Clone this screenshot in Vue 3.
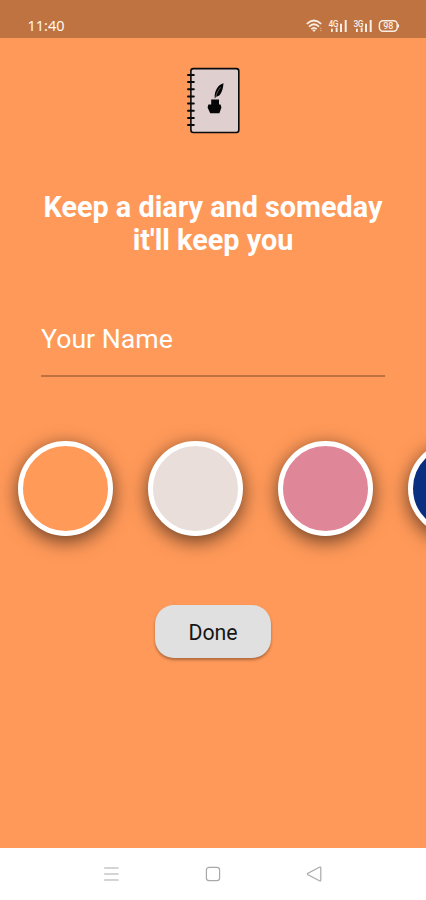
<script setup>
import { ref } from 'vue'

const name = ref('')
const swatches = ['#ff9a59', '#e9ded9', '#e08699', '#0b2f80']
const selected = ref(0)
const bindings = [10, 17.1, 24.3, 31.4, 38.6, 45.7, 52.9, 60]
</script>

<template>
  <main class="screen">
    <header class="status">
      <span class="clock">11:40</span>
      <svg class="signals" width="96" height="16" viewBox="0 0 96 16" aria-hidden="true">
        <g fill="none" stroke="#f8eee6" stroke-width="1.8">
          <path d="M.8 5.8Q8 -.8 15.2 5.8" />
          <path d="M3 8.6Q8 3.9 13 8.6" />
          <path d="M5.3 11.2Q8 8.6 10.7 11.2" />
        </g>
        <path d="M6.2 12.1Q8 10.8 9.8 12.1L8 14Z" fill="#f8eee6" />
        <path d="M13.6 10.8l1.2-1.5 1.2 1.5zM13.6 12.1l1.2 1.5 1.2-1.5z" fill="#dba987" />
        <g fill="#f8eee6">
          <path d="M25 10.8h1.8V14H25zM29.7 9.5h1.9V14h-1.9zM34 5.7h2V14h-2zM38.7 2h2v12h-2z" />
          <path d="M50 10.8h1.8V14H50zM54.7 9.5h1.9V14h-1.9zM59 5.7h2V14h-2zM63.7 2h2v12h-2z" />
        </g>
        <text class="net" x="22.6" y="8.7">4G</text>
        <text class="net" x="47.6" y="8.7">3G</text>
        <rect x="73.4" y="2.8" width="17.8" height="10.4" rx="3.6" fill="none" stroke="#f8eee6" stroke-width="1.5" />
        <path d="M92 6.1q1.2.2 1.2 1.9T92 9.9z" fill="#f8eee6" />
        <text class="charge" x="82.3" y="11.3">98</text>
      </svg>
    </header>

    <section class="content">
      <svg class="logo" width="56" height="70" viewBox="0 0 56 70" aria-hidden="true">
        <rect x="5.9" y="3.6" width="47.9" height="63.9" rx="2.4" fill="#e0cfcf" stroke="#090a0d" stroke-width="1.6" />
        <g stroke="#090a0d" stroke-width="2" stroke-linecap="round">
          <line v-for="y in bindings" :key="y" x1="3" :y1="y" x2="8.8" :y2="y" />
        </g>
        <path d="M26.2 34.5h7.8v5h1.6l.8 3-2 5.7h-9.2l-2.6-5.7.8-3h2.8z" fill="#050505" />
        <path d="M29.8 33.4C29.2 29.3 30.3 25.7 32.2 23c1.6-2.3 3.6-3.8 6.3-4.7-.3 4.6-1.3 8.3-3.4 11.2-1 1.3-2.9 2.2-4 2.3z" fill="#050505" />
        <path d="M30.8 32.2C31.4 28.6 33 25.4 35.6 22.4" fill="none" stroke="#9d9191" stroke-width=".6" />
      </svg>

      <h1 class="title">Keep a diary and someday it'll keep you</h1>

      <input v-model="name" class="name" type="text" placeholder="Your Name" aria-label="Your Name" />

      <div class="palette">
        <button
          v-for="(color, index) in swatches"
          :key="color"
          class="swatch"
          type="button"
          :aria-label="color"
          :aria-pressed="selected === index"
          :style="{ backgroundColor: color }"
          @click="selected = index"
        ></button>
      </div>

      <button class="done" type="button">Done</button>
    </section>

    <nav class="navbar">
      <svg width="18" height="18" viewBox="0 0 18 18" aria-hidden="true">
        <path d="M1.2 3h14.4M1.2 9h14.4M1.2 15h14.4" />
      </svg>
      <svg width="18" height="18" viewBox="0 0 18 18" aria-hidden="true">
        <rect x="2.4" y="2.3" width="13.2" height="13.3" rx="2.7" />
      </svg>
      <svg width="18" height="18" viewBox="0 0 18 18" aria-hidden="true">
        <path d="M14.8 3v12q0 1.5-1.4.8L2 9.8q-1.2-.8 0-1.6l11.4-6q1.4-.7 1.4.8z" />
      </svg>
    </nav>
  </main>
</template>

<style>
body {
  margin: 0;
}
</style>

<style scoped>
.screen {
  display: flex;
  flex-direction: column;
  width: 426px;
  height: 900px;
  overflow: hidden;
  background: #ff9959;
  font-family: Roboto, sans-serif;
}

.status {
  display: flex;
  flex: none;
  align-items: center;
  justify-content: space-between;
  box-sizing: border-box;
  height: 38px;
  padding: 14px 24px 0 27.5px;
  background: #be7341;
}

.clock {
  padding-bottom: 2px;
  color: #fff8f1;
  font-family: "Noto Sans", sans-serif;
  font-size: 14.5px;
  font-weight: 400;
  line-height: 22px;
}

.signals {
  display: block;
}

.net {
  fill: #f8eee6;
  stroke: #be7341;
  stroke-width: 0.6px;
  paint-order: stroke;
  font-size: 8.4px;
  font-weight: 500;
  letter-spacing: -0.5px;
}

.charge {
  fill: #f8eee6;
  font-size: 9px;
  font-weight: 500;
  text-anchor: middle;
}

.content {
  display: flex;
  flex: 1;
  flex-direction: column;
  align-items: center;
  min-height: 0;
  padding-top: 27px;
}

.logo {
  display: block;
  flex: none;
}

.title {
  width: 360px;
  margin: 56px 0 0;
  color: #fff;
  font-size: 28.8px;
  font-weight: 700;
  line-height: 33px;
  text-align: center;
}

.name {
  box-sizing: border-box;
  width: 344px;
  height: 61px;
  margin-top: 59px;
  padding: 0 0 13px;
  border: 0;
  border-bottom: 2px solid #bd7243;
  border-radius: 0;
  outline: 0;
  background: transparent;
  color: #fff;
  font: 400 26.7px/32px Roboto, sans-serif;
}

.name::placeholder {
  color: #fff;
  opacity: 1;
}

.palette {
  display: flex;
  flex: none;
  align-self: stretch;
  gap: 35.3px;
  margin-top: 40px;
  padding: 24px 17.6px 40px;
  overflow: hidden;
}

.swatch {
  flex: none;
  box-sizing: border-box;
  width: 95px;
  height: 95px;
  padding: 0;
  border: 5px solid #fff;
  border-radius: 50%;
  box-shadow: 0 5px 19px rgba(0, 0, 0, 0.6);
}

.done {
  flex: none;
  width: 116px;
  height: 53px;
  margin-top: 29px;
  padding: 2px 0 0;
  border: 0;
  border-radius: 19px;
  background: #e0e0e0;
  box-shadow: 0 2px 3px rgba(0, 0, 0, 0.32);
  color: #161616;
  font: 400 21.3px/51px Roboto, sans-serif;
}

.navbar {
  display: flex;
  flex: none;
  align-items: center;
  justify-content: center;
  gap: 83.5px;
  height: 52px;
  background: #fff;
}

.navbar svg {
  display: block;
  fill: none;
  stroke: #a9a9a9;
  stroke-width: 1.2;
}
</style>
